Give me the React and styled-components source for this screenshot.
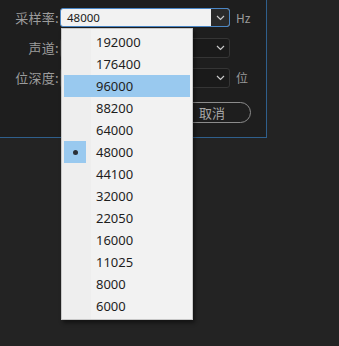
import styled, { createGlobalStyle } from 'styled-components';

const GlobalStyle = createGlobalStyle`
  html, body {
    margin: 0;
    padding: 0;
    background: #232323;
  }
  body {
    font-family: "Noto Sans", "Noto Sans CJK SC", sans-serif;
    width: 339px;
    height: 346px;
    overflow: hidden;
  }
`;

const rates = [
  '192000', '176400', '96000', '88200', '64000', '48000', '44100',
  '32000', '22050', '16000', '11025', '8000', '6000',
];

const Screen = styled.div`
  position: relative;
  width: 339px;
  height: 346px;
`;

const Dialog = styled.section`
  box-sizing: border-box;
  width: 267px;
  height: 138px;
  background: #1e1e1e;
  border-right: 1px solid #2f5f8c;
  border-bottom: 1px solid #2f5f8c;
  padding-top: 8px;
  display: flex;
  flex-direction: column;
  gap: 11px;
`;

const Row = styled.div`
  display: flex;
  align-items: center;
  height: 19px;
`;

const Label = styled.span`
  width: 60px;
  text-align: right;
  padding-right: 1px;
  box-sizing: border-box;
  font-family: "Noto Sans CJK SC", sans-serif;
  font-size: 13px;
  color: #9c9c9c;
  letter-spacing: 0.3px;
`;

const Select = styled.div`
  box-sizing: border-box;
  width: 170px;
  height: ${p => (p.$open ? '19px' : '20px')};
  display: flex;
  border: 1px solid ${p => (p.$open ? '#4a86c5' : '#353535')};
  border-radius: 3px;
  background: ${p => (p.$open ? '#f2f2f2' : '#1a1a1a')};
  overflow: hidden;
`;

const SelectValue = styled.span`
  flex: 1;
  padding-left: 6px;
  font-size: 11.5px;
  line-height: 17px;
  color: #1a1a1a;
`;

const Arrow = styled.span`
  width: 18px;
  display: flex;
  align-items: center;
  justify-content: center;
  background: ${p => (p.$open ? '#2a2a2a' : 'transparent')};
  margin-left: auto;
`;

const Suffix = styled.span`
  margin-left: 6px;
  font-family: "Noto Sans CJK SC", sans-serif;
  font-size: 12px;
  color: #9a9a9a;
`;

const ButtonRow = styled.div`
  display: flex;
  justify-content: flex-end;
  padding-right: 15px;
  margin-top: 4px;
`;

const CancelButton = styled.button`
  box-sizing: border-box;
  width: 78px;
  height: 21px;
  border: 1.5px solid #8c8c8c;
  border-radius: 11px;
  background: transparent;
  color: #a8a8a8;
  font-family: "Noto Sans CJK SC", sans-serif;
  font-size: 13px;
  line-height: 17px;
  padding: 0;
  text-align: center;
`;

const Menu = styled.ul`
  position: absolute;
  left: 61px;
  top: 28px;
  box-sizing: border-box;
  width: 132px;
  margin: 0;
  padding: 2px;
  list-style: none;
  background: linear-gradient(to right, #eeeeee 29px, #f2f2f2 29px);
  border: 1px solid #c8c8c8;
  box-shadow: 2px 3px 4px rgba(0, 0, 0, 0.45);
`;

const Item = styled.li`
  display: flex;
  align-items: center;
  height: 22px;
  background: ${p => (p.$hover ? '#99c9ef' : 'transparent')};
`;

const Check = styled.span`
  width: 22px;
  height: 22px;
  display: flex;
  align-items: center;
  justify-content: center;
  background: ${p => (p.$on ? '#99c9ef' : 'transparent')};
`;

const Dot = styled.span`
  width: 5px;
  height: 5px;
  border-radius: 50%;
  background: #2a2f36;
`;

const ItemText = styled.span`
  margin-left: 10px;
  font-size: 13px;
  color: #1e1e1e;
`;

const Chevron = () => (
  <svg width="9" height="6" viewBox="0 0 9 6">
    <path d="M1 1 L4.5 4.5 L8 1" fill="none" stroke="#c8c8c8" strokeWidth="1.2" />
  </svg>
);

export default function App() {
  return (
    <Screen>
      <GlobalStyle />
      <Dialog>
        <Row>
          <Label>采样率:</Label>
          <Select $open>
            <SelectValue>48000</SelectValue>
            <Arrow $open><Chevron /></Arrow>
          </Select>
          <Suffix>Hz</Suffix>
        </Row>
        <Row>
          <Label>声道:</Label>
          <Select>
            <Arrow><Chevron /></Arrow>
          </Select>
        </Row>
        <Row>
          <Label>位深度:</Label>
          <Select>
            <Arrow><Chevron /></Arrow>
          </Select>
          <Suffix>位</Suffix>
        </Row>
        <ButtonRow>
          <CancelButton>取消</CancelButton>
        </ButtonRow>
      </Dialog>
      <Menu>
        {rates.map(r => (
          <Item key={r} $hover={r === '96000'}>
            <Check $on={r === '48000'}>{r === '48000' && <Dot />}</Check>
            <ItemText>{r}</ItemText>
          </Item>
        ))}
      </Menu>
    </Screen>
  );
}
